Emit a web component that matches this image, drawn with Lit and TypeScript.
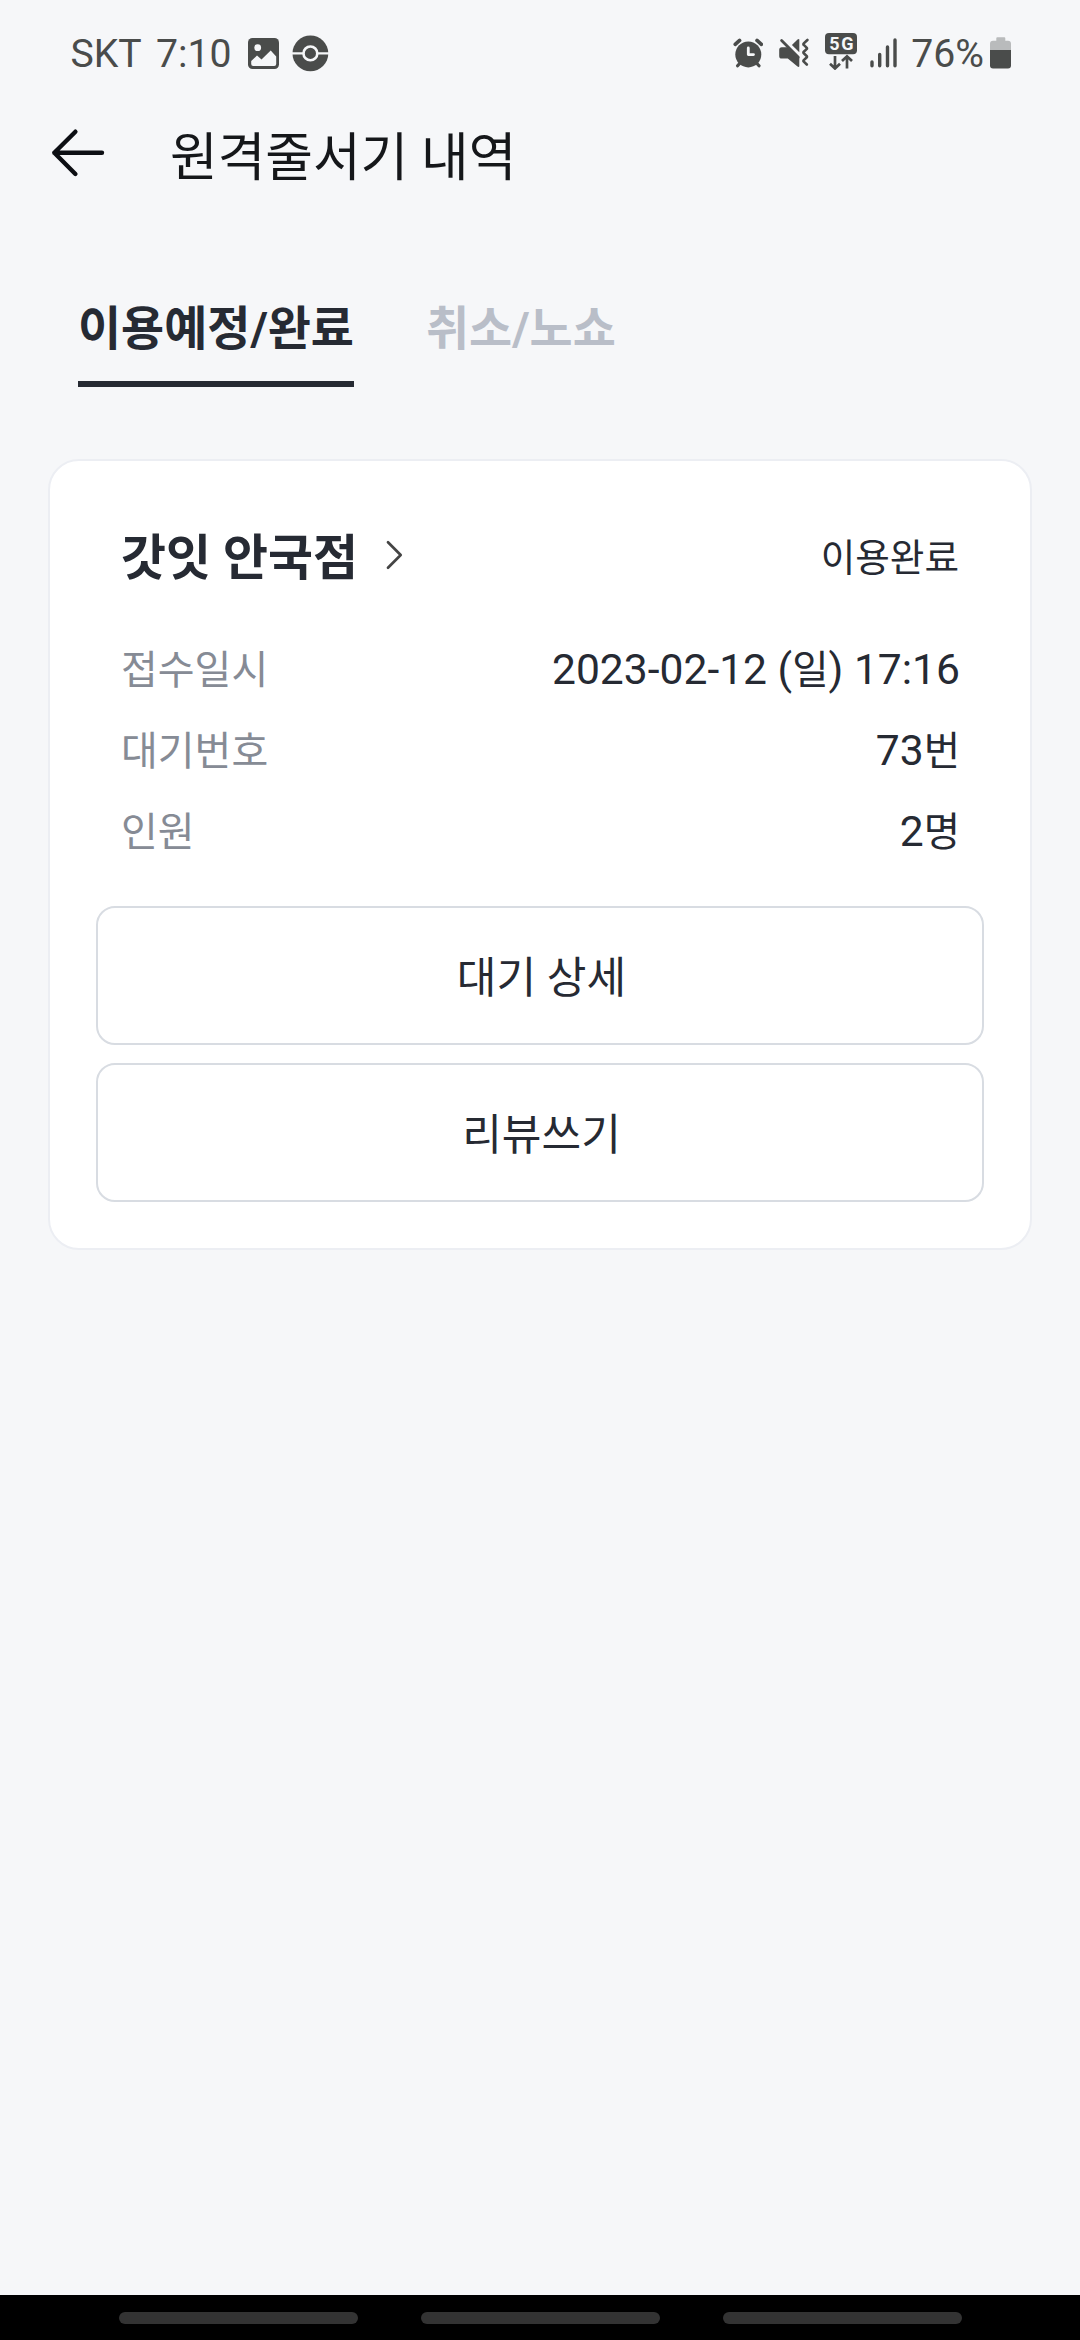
import { LitElement, html, css } from "lit";
import { customElement, property } from "lit/decorators.js";

@customElement("status-bar")
class StatusBar extends LitElement {
  static styles = css`
    :host {
      display: flex;
      justify-content: space-between;
      height: 107px;
      padding: 0 69px 0 70.5px;
      box-sizing: border-box;
      color: #4a4c4b;
      font-size: 39.2px;
      line-height: 107px;
    }
    .group {
      display: flex;
      align-items: center;
    }
    .text {
      padding-top: 2px;
    }
    svg {
      display: block;
      flex: none;
    }
    .clock {
      margin: 0 16px 0 14.3px;
    }
    .ball {
      margin-left: 13px;
    }
    .right {
      gap: 16px;
    }
    .raised {
      margin-top: -2px;
    }
    .network {
      margin: -4px -3px 0 0;
    }
    .percent {
      margin: 0 -10px 0 -2px;
    }
    .badge {
      font: 700 18px Roboto, sans-serif;
    }
  `;
  render() {
    return html`
      <div class="group">
        <span class="text">SKT</span>
        <span class="text clock">7:10</span>
        <svg width="31" height="31" viewBox="0 0 31 31">
          <rect width="31" height="31" rx="4.5" fill="#4a4c4b" />
          <circle cx="9.7" cy="9.7" r="3.4" fill="#f6f7f9" />
          <path d="M3.2 23 9 17.6l4.5 4 9.2-9.2 5.5 6V26a2 2 0 0 1-2 2H5.2a2 2 0 0 1-2-2Z" fill="#f6f7f9" />
        </svg>
        <svg class="ball" width="37" height="37" viewBox="0 0 37 37">
          <circle cx="18.4" cy="18.4" r="17.9" fill="#4a4c4b" />
          <path d="M0 18.4H37" stroke="#f6f7f9" stroke-width="2.3" />
          <circle cx="18.4" cy="18.4" r="6.9" fill="#4a4c4b" stroke="#f6f7f9" stroke-width="2.6" />
        </svg>
      </div>
      <div class="group right">
        <svg class="raised" width="30" height="30" viewBox="0 0 30 30" fill="none" stroke="#4a4c4b" stroke-linecap="round">
          <circle cx="15.3" cy="16.4" r="13" fill="#4a4c4b" stroke="none" />
          <path d="M2.2 6.4 6.6 2.4M24 2.4l4.4 4" stroke-width="3.6" />
          <path d="M4.6 27.8 8 24M26 27.8 22.6 24" stroke-width="3.2" />
          <path d="M15.3 10V16.6h5.2" stroke="#f6f7f9" stroke-width="2.8" stroke-linejoin="round" />
        </svg>
        <svg class="raised" width="30" height="30" viewBox="0 0 30 30" fill="#4a4c4b">
          <path d="M20.3 1.8v12.4l-7.4-7.2 5.6-5.4q1.8-1.2 1.8.2Z" />
          <path d="M2.8 9.2h6L20.3 20v8q0 1.8-1.8.6L8.8 20.6h-6Q.2 20.6.2 18v-6.2q0-2.6 2.6-2.6Z" />
          <path d="M2.6 2.6 19.3 19.3" fill="none" stroke="#4a4c4b" stroke-width="2.8" stroke-linecap="round" />
          <path d="m28.400 2-3.600 3.400q-.8.800 0 1.500l2.800 2.700q.8.800 0 1.500l-2.800 2.700q-.8.800 0 1.500l2.800 2.700q.8.800 0 1.500l-2.800 2.600q-.8.800 0 1.500l3 2.900" fill="none" stroke="#4a4c4b" stroke-width="2.6" stroke-linecap="round" />
        </svg>
        <svg class="network" width="32" height="37" viewBox="0 0 32 37">
          <rect width="32" height="21.3" rx="4" fill="#4a4c4b" />
          <text class="badge" x="16.3" y="17.2" text-anchor="middle" textLength="24.3" fill="#f6f7f9">5G</text>
          <path d="M10 23v12M5 30.800l5 4.700 5-4.700M22 35.400v-12M17 28l5-4.700 5 4.700" fill="none" stroke="#4a4c4b" stroke-width="2.7" />
        </svg>
        <svg class="raised" width="27" height="30" viewBox="0 0 27 30" stroke="#4a4c4b" stroke-width="3.4" stroke-linecap="round">
          <path d="M2 24v3.700M9.700 16.500v11.200M17.500 9v18.700M25 2v25.700" />
        </svg>
        <span class="text percent">76%</span>
        <svg class="raised" width="21" height="32" viewBox="0 0 21 32">
          <path d="M7.300.3h7q1 0 1 1v2.500H18q3 0 3 3V13H0V6.800q0-3 3-3h3.300V1.300q0-1 1-1Z" fill="#b9bbbc" />
          <path d="M0 13h21v15.500q0 3-3 3H3q-3 0-3-3Z" fill="#4a4c4b" />
        </svg>
      </div>
    `;
  }
}

@customElement("info-row")
class InfoRow extends LitElement {
  @property() label = "";
  @property() value = "";
  static styles = css`
    :host {
      display: flex;
      justify-content: space-between;
      height: 81px;
      line-height: 81px;
    }
    .label {
      padding-top: 1px;
      color: #868b95;
      font-size: 40px;
    }
    .value {
      color: #262a33;
      font-size: 42.6px;
    }
    .hangul {
      font-size: 39.5px;
      line-height: 1;
    }
  `;
  render() {
    const parts = this.value.split(/([가-힣]+)/);
    return html`<span class="label">${this.label}</span
      ><span class="value">${parts.map((part, i) => (i % 2 ? html`<span class="hangul">${part}</span>` : part))}</span>`;
  }
}

@customElement("waiting-card")
class WaitingCard extends LitElement {
  static styles = css`
    :host {
      display: block;
      box-sizing: border-box;
      padding: 57px 46px 46px;
      border: 2px solid #eceef3;
      border-radius: 31px;
      background: #fff;
      color: #262a33;
    }
    .head {
      display: flex;
      align-items: center;
      height: 80px;
      padding: 0 25px;
      line-height: 80px;
    }
    .name {
      padding-top: 2px;
      font-size: 48.9px;
      font-weight: 700;
    }
    .chevron {
      display: block;
      margin-left: 28px;
      padding-bottom: 6px;
    }
    .state {
      margin-left: auto;
      font-size: 37.6px;
    }
    .rows {
      margin-top: 31px;
      padding: 0 24px 0 25px;
    }
    .actions {
      display: flex;
      flex-direction: column;
      gap: 18px;
      margin-top: 34px;
    }
    .action {
      height: 139px;
      box-sizing: border-box;
      padding: 6px 0 0 3px;
      border: 2px solid #d8dce2;
      border-radius: 19px;
      background: #fff;
      color: #262a33;
      font-family: inherit;
      font-size: 43.1px;
      line-height: 129px;
      text-align: center;
    }
  `;
  render() {
    return html`
      <div class="head">
        <span class="name">갓잇 안국점</span>
        <svg class="chevron" width="18" height="30" viewBox="0 0 18 30" fill="none" stroke="#444" stroke-width="2.7" stroke-linecap="round" stroke-linejoin="round">
          <path d="M2 2.300 14.700 15 2 27.700" />
        </svg>
        <span class="state">이용완료</span>
      </div>
      <div class="rows">
        <info-row label="접수일시" value="2023-02-12 (일) 17:16"></info-row>
        <info-row label="대기번호" value="73번"></info-row>
        <info-row label="인원" value="2명"></info-row>
      </div>
      <div class="actions">
        <button class="action">대기 상세</button>
        <button class="action">리뷰쓰기</button>
      </div>
    `;
  }
}

@customElement("app-root")
class AppRoot extends LitElement {
  static styles = css`
    :host {
      display: flex;
      flex-direction: column;
      height: 2340px;
      background: #f6f7f9;
      font-family: Roboto, "Noto Sans CJK KR", sans-serif;
    }
    .header {
      display: flex;
      align-items: center;
      gap: 64px;
      height: 100px;
      padding-left: 50px;
    }
    .back {
      display: block;
      padding-bottom: 8px;
    }
    .title {
      padding-top: 4px;
      color: #15171a;
      font-size: 51.8px;
      line-height: 96px;
    }
    .tabs {
      display: flex;
      gap: 72px;
      padding: 92px 78px 0;
    }
    .tab {
      padding-bottom: 21px;
      border-bottom: 6px solid transparent;
      color: #b9bec8;
      font-size: 46.85px;
      font-weight: 700;
      line-height: 61px;
    }
    .active {
      border-color: #262a33;
      color: #262a33;
    }
    .card {
      margin: 72px 48px 0;
    }
    .navbar {
      display: flex;
      align-items: center;
      justify-content: center;
      gap: 63px;
      height: 45px;
      margin-top: auto;
      padding-top: 1px;
      box-sizing: border-box;
      background: #000;
    }
    .pill {
      width: 239px;
      height: 12px;
      border-radius: 6px;
      background: #333;
    }
  `;
  render() {
    return html`
      <status-bar></status-bar>
      <div class="header">
        <svg class="back" width="56" height="50" viewBox="0 0 56 50" fill="none" stroke="#0d0f14" stroke-width="4.4" stroke-linecap="round" stroke-linejoin="round">
          <path d="M25.400 3.700 4.300 24.800 25.400 46M4.300 24.800H52" />
        </svg>
        <span class="title">원격줄서기 내역</span>
      </div>
      <div class="tabs">
        <span class="tab active">이용예정/완료</span>
        <span class="tab">취소/노쇼</span>
      </div>
      <waiting-card class="card"></waiting-card>
      <div class="navbar">
        <div class="pill"></div>
        <div class="pill"></div>
        <div class="pill"></div>
      </div>
    `;
  }
}
